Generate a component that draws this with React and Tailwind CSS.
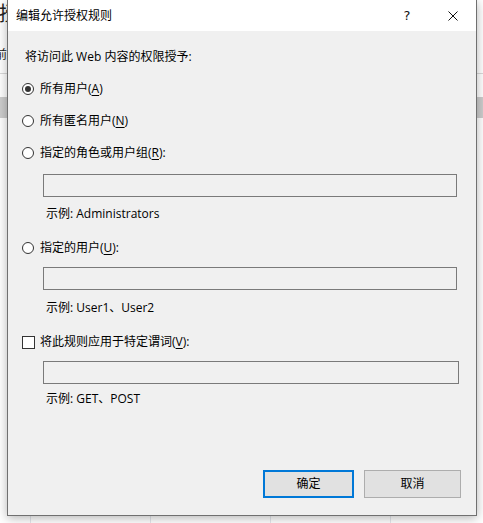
import React from 'react';

const Mnemonic = ({ before, letter, after }) => (
  <span>
    {before}(<span className="underline underline-offset-2">{letter}</span>){after}
  </span>
);

const Radio = ({ checked, children, className }) => (
  <div className={`flex items-center h-[16px] ${className}`}>
    <span className="flex items-center justify-center w-[12px] h-[12px] rounded-full border border-[#333] bg-white shrink-0">
      {checked && <span className="w-[6px] h-[6px] rounded-full bg-[#333]" />}
    </span>
    <span className="ml-[6px] leading-[16px]">{children}</span>
  </div>
);

const Field = ({ className }) => (
  <div className={`h-[23px] border border-[#7a7a7a] bg-[#f0f0f0] ${className}`} />
);

const App = () => {
  return (
    <div className="relative w-[483px] h-[523px] overflow-hidden bg-white text-[12px] text-black font-['Open_Sans','Noto_Sans_CJK_SC',sans-serif]">
      {/* window behind the dialog */}
      <span className="absolute left-[-1px] top-[2px] text-[20px] leading-[24px] text-[#222]">授</span>
      <span className="absolute left-[-5px] top-[47px] leading-[16px] text-[#222]">前</span>
      <div className="absolute left-0 top-[73px] w-full h-px bg-[#dadada]" />
      <div className="absolute left-0 top-[97px] w-full h-[21px] bg-[#cdcdcd]" />
      <div className="absolute left-[30px] top-[500px] w-px h-[30px] bg-[#e4e7ec]" />
      <div className="absolute left-[150px] top-[500px] w-px h-[30px] bg-[#e4e7ec]" />
      <div className="absolute left-[270px] top-[500px] w-px h-[30px] bg-[#e4e7ec]" />
      <div className="absolute left-[390px] top-[500px] w-px h-[30px] bg-[#e4e7ec]" />

      {/* Dialog */}
      <div className="absolute left-[7px] top-0 w-[470px] h-[516px] flex flex-col border-x border-b border-[#707070] bg-[#f0f0f0] shadow-[0_2px_10px_rgba(0,0,0,0.3)]">
        {/* Title bar */}
        <div className="flex items-center h-[31px] bg-white shrink-0">
          <span className="pl-[8px] leading-[16px]">编辑允许授权规则</span>
          <div className="ml-auto flex h-full">
            <span className="w-[46px] flex items-center justify-center text-[13px] font-['DejaVu_Sans',sans-serif] text-[#111]">?</span>
            <span className="w-[46px] flex items-center justify-center">
              <svg width="10" height="10" viewBox="0 0 10 10" className="text-[#111]">
                <path d="M0.5 0.5 L9.5 9.5 M9.5 0.5 L0.5 9.5" stroke="currentColor" strokeWidth="1" fill="none" />
              </svg>
            </span>
          </div>
        </div>

        {/* Body */}
        <div className="flex flex-col flex-1 pl-[14px]">
          <div className="mt-[18px] ml-[3px] leading-[16px]">将访问此 Web 内容的权限授予:</div>

          <Radio checked className="mt-[16px]">
            <Mnemonic before="所有用户" letter="A" after="" />
          </Radio>
          <Radio className="mt-[16px]">
            <Mnemonic before="所有匿名用户" letter="N" after="" />
          </Radio>
          <Radio className="mt-[16px]">
            <Mnemonic before="指定的角色或用户组" letter="R" after=":" />
          </Radio>
          <Field className="mt-[13px] ml-[21px] w-[414px]" />
          <div className="mt-[9px] ml-[24px] leading-[16px]">示例: Administrators</div>

          <Radio className="mt-[18px]">
            <Mnemonic before="指定的用户" letter="U" after=":" />
          </Radio>
          <Field className="mt-[11px] ml-[21px] w-[414px]" />
          <div className="mt-[10px] ml-[24px] leading-[16px]">示例: User1、User2</div>

          <div className="mt-[18px] flex items-center h-[16px]">
            <span className="w-[13px] h-[13px] border border-[#333] bg-white shrink-0" />
            <span className="ml-[5px] leading-[16px]">
              <Mnemonic before="将此规则应用于特定谓词" letter="V" after=":" />
            </span>
          </div>
          <Field className="mt-[11px] ml-[21px] w-[416px]" />
          <div className="mt-[7px] ml-[24px] leading-[16px]">示例: GET、POST</div>

          {/* Buttons */}
          <div className="mt-auto mb-[17px] flex justify-end gap-[10px] pr-[15px]">
            <button className="w-[91px] h-[28px] border-2 border-[#0078d7] bg-[#e1e1e1] leading-[16px]">确定</button>
            <button className="w-[97px] h-[28px] border border-[#adadad] bg-[#e1e1e1] leading-[16px]">取消</button>
          </div>
        </div>
      </div>
    </div>
  );
};

export default App;
